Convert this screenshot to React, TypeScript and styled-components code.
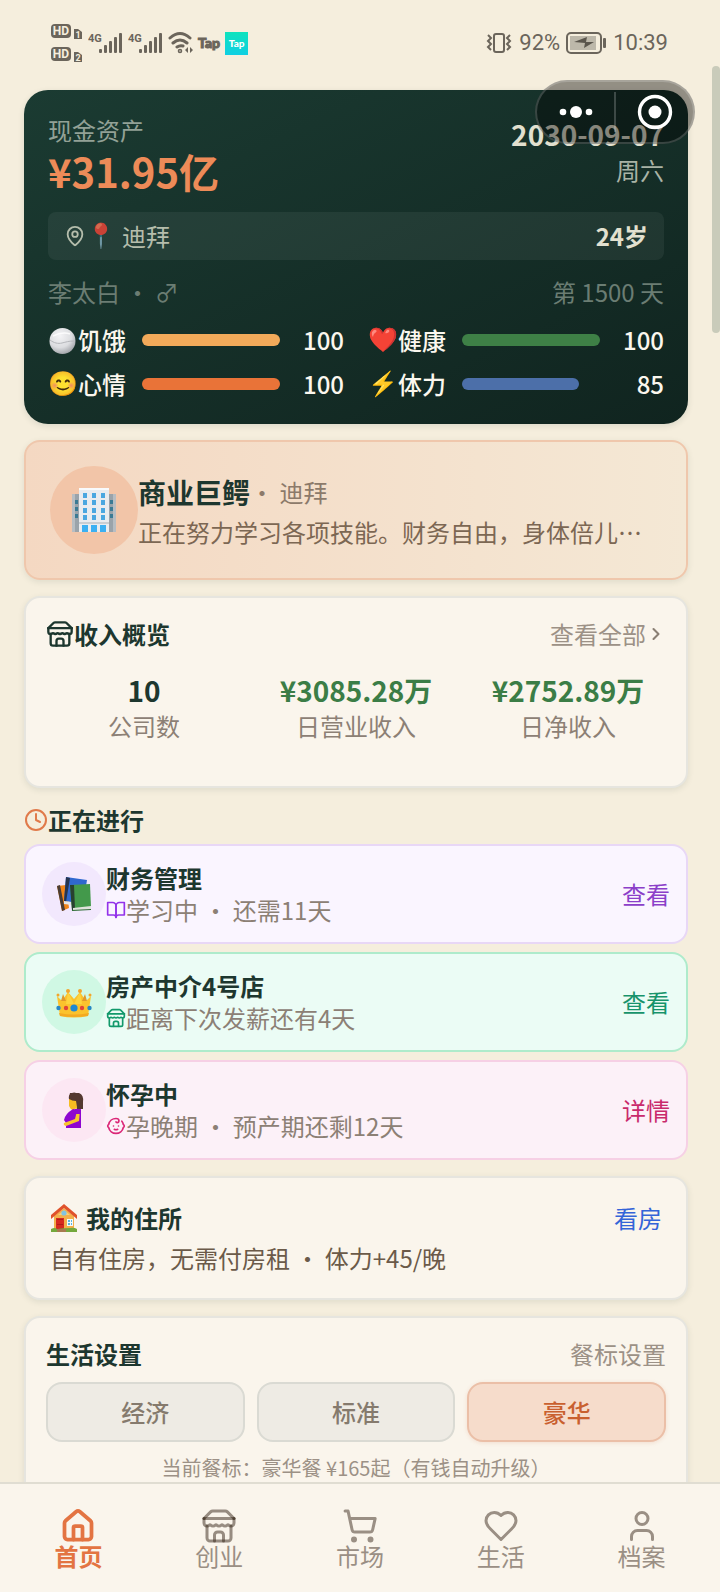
import React from "react";
import styled, { createGlobalStyle } from "styled-components";
import { Clock, MapPin, ChevronRight } from "lucide-react";

const GlobalStyle = createGlobalStyle`
  *, *::before, *::after { box-sizing: border-box; }
  body {
    margin: 0;
    background: #f5eedd;
    font-family: "Noto Sans CJK SC", "Noto Sans", sans-serif;
    font-size: 24px;
    line-height: 32px;
    color: #1d372f;
  }
  button { font: inherit; border: 0; background: none; padding: 0; cursor: pointer; }
  h1, h2, h3, p, dl, dd, dt { margin: 0; font-size: inherit; font-weight: inherit; }
`;

const Shell = styled.div`
  position: relative;
  height: 100vh;
  display: flex;
  flex-direction: column;
  background: #f5eedd;
`;

const Scroller = styled.main`
  flex: 1;
  min-height: 0;
  overflow-y: auto;
  scrollbar-width: none;
  padding: 0 32px 24px 24px;
  display: flex;
  flex-direction: column;
  gap: 16px;
  & > * { flex-shrink: 0; }
`;

const StatusBar = styled.header`
  display: flex;
  justify-content: space-between;
  align-items: center;
  height: 90px;
  padding: 0 20px 4px 27px;
  color: #6b655b;
`;
const StatusGroup = styled.div<{ $gap: number }>`
  display: flex;
  align-items: center;
  gap: ${(p) => p.$gap}px;
  font-family: Roboto, sans-serif;
  font-size: 22px;
`;

const HdBadges = () => (
  <svg width="32" height="38" viewBox="0 0 32 38" fontFamily="Roboto, sans-serif" fontWeight="700">
    {[0, 23].map((y, i) => (
      <g key={y} transform={`translate(0 ${y})`}>
        <rect x="0" y="0" width="20" height="14" rx="4" fill="#6b655b" />
        <text x="10" y="11" fontSize="12" textAnchor="middle" fill="#f5eedd">HD</text>
        <path d="M23 5h4l4 3v7h-8z" fill="#6b655b" />
        <text x="27" y="14" fontSize="9" textAnchor="middle" fill="#f5eedd">{i + 1}</text>
      </g>
    ))}
  </svg>
);
const Signal = () => (
  <svg width="35" height="24" viewBox="0 0 35 24" fontFamily="Roboto, sans-serif">
    <text x="0" y="11" fontSize="11" fontWeight="700" fill="#6b655b">4G</text>
    {[4, 8, 12, 16, 20].map((h, i) => (
      <rect key={h} x={11 + i * 5} y={22 - h} width="3" height={h} rx="1" fill="#6b655b" />
    ))}
  </svg>
);
const Wifi = () => (
  <svg width="25" height="24" viewBox="0 0 25 24" fill="none" stroke="#6b655b" strokeWidth="3" strokeLinecap="round">
    <path d="M2 7q10-9 20 0M5 12q7-6 14 0M9 16q3-2 6-1" />
    <circle cx="12" cy="20" r="0.8" />
    <path d="M20 16l-3 3 3 3zM22 16l3 3-3 3z" fill="#6b655b" stroke="none" />
  </svg>
);
const TapMark = styled.span`
  font-family: Lato, sans-serif;
  font-weight: 900;
  font-size: 14px;
  -webkit-text-stroke: 1px currentColor;
`;
const TapTile = styled.span`
  width: 23px;
  height: 23px;
  line-height: 22px;
  font-family: Lato, sans-serif;
  font-weight: 900;
  font-size: 10px;
  text-align: center;
  color: #fff;
  background: linear-gradient(#0fe3bd, #0fcfe3);
`;
const Vibrate = () => (
  <svg width="27" height="22" viewBox="0 0 27 22" fill="none" stroke="#6b655b" strokeWidth="2">
    <rect x="8" y="2" width="10" height="18" rx="2" />
    <path d="M2 3l3 3-3 3 3 3-3 3 3 3M24 3l-3 3 3 3-3 3 3 3-3 3" />
  </svg>
);
const Battery = () => (
  <svg width="41" height="22" viewBox="0 0 41 22">
    <rect x="1" y="1" width="34" height="20" rx="4" fill="none" stroke="#6b655b" strokeWidth="2" />
    <rect x="4" y="4" width="26" height="14" fill="#bdb8aa" />
    <path d="M8 10l13-5-1 5h8l-10 6 1-5z" fill="#5b564d" />
    <rect x="37" y="6" width="3" height="10" rx="1" fill="#6b655b" />
  </svg>
);

const Capsule = styled.div`
  position: absolute;
  top: 80px;
  right: 25px;
  width: 160px;
  height: 64px;
  display: flex;
  align-items: center;
  border-radius: 32px;
  border: 2px solid rgba(255, 255, 255, 0.18);
  background: rgba(0, 0, 0, 0.4);
`;
const CapsuleButton = styled.button`
  flex: 1;
  height: 40px;
  display: flex;
  align-items: center;
  justify-content: center;
  & + & { border-left: 2px solid rgba(255, 255, 255, 0.2); }
`;
const ScrollThumb = styled.div`
  position: absolute;
  top: 66px;
  right: 0;
  width: 8px;
  height: 267px;
  border-radius: 4px;
  background: #c9cbba;
`;

const Hero = styled.section`
  margin-top: -16px;
  padding: 24px;
  border-radius: 24px;
  color: #fbf7ee;
  background: linear-gradient(155deg, #1b3b32, #10241f);
  box-shadow: 0 2px 6px rgba(29, 55, 47, 0.12);
`;
const Row = styled.div`
  display: flex;
  justify-content: space-between;
  align-items: center;
`;
const HeroTop = styled(Row)`
  align-items: flex-start;
`;
const Muted = styled.p`
  color: #92a196;
`;
const Amount = styled.p`
  font-size: 40px;
  line-height: 50px;
  font-weight: 700;
  color: #ed8b58;
`;
const DateBlock = styled.div`
  text-align: right;
  color: #a9b3a6;
`;
const DateText = styled.p`
  font-size: 28px;
  line-height: 40px;
  font-weight: 700;
  color: #e2e0cf;
`;
const PlaceBar = styled(Row)`
  height: 48px;
  margin-top: 16px;
  padding: 0 16px;
  border-radius: 8px;
  background: rgba(255, 255, 255, 0.06);
`;
const Place = styled.span`
  display: flex;
  align-items: center;
  color: #b5bdac;
`;
const Age = styled.strong`
  color: #e2e0cf;
`;
const NameRow = styled(Row)`
  margin-top: 16px;
  color: #6b7d73;
`;
const Meters = styled.div`
  display: grid;
  grid-template-columns: 1fr 1fr;
  gap: 12px 24px;
  margin-top: 16px;
`;
const Meter = styled.div`
  display: grid;
  grid-template-columns: 78px 1fr 48px;
  gap: 16px;
  align-items: center;
  font-weight: 500;
`;
const MeterLabel = styled.span`
  display: flex;
  align-items: center;
  white-space: nowrap;
`;
const MeterValue = styled.span`
  text-align: right;
`;
const Track = styled.div`
  height: 12px;
`;
const Fill = styled.div<{ $color: string }>`
  height: 100%;
  border-radius: 6px;
  background: ${(p) => p.$color};
`;
const Emoji = styled.span<{ $width?: number; $dim?: boolean }>`
  display: inline-flex;
  align-items: center;
  flex: none;
  width: ${(p) => p.$width ?? 30}px;
  font-family: "Noto Color Emoji", sans-serif;
  opacity: ${(p) => (p.$dim ? 0.8 : 1)};
`;

const Card = styled.section<{ $pad?: number }>`
  padding: ${(p) => p.$pad ?? 20}px;
  border: 2px solid #e6e5df;
  border-radius: 16px;
  background: #faf5ec;
  box-shadow: 0 2px 6px rgba(29, 55, 47, 0.1);
`;
const ProfileCard = styled(Card)`
  display: flex;
  align-items: center;
  border-color: #efc7ac;
  background: linear-gradient(90deg, #f4d8c2, #f4e8d5);
`;
const Avatar = styled.div<{ $size: number; $bg: string }>`
  flex: none;
  display: flex;
  align-items: center;
  justify-content: center;
  width: ${(p) => p.$size}px;
  height: ${(p) => p.$size}px;
  border-radius: 50%;
  background: ${(p) => p.$bg};
`;
const Body = styled.div`
  flex: 1;
  min-width: 0;
`;
const ProfileBody = styled(Body)`
  padding-top: 4px;
`;
const ProfileTitle = styled.h1`
  display: flex;
  align-items: center;
  line-height: 40px;
  color: #8c7a6a;
`;
const JobName = styled.strong`
  font-size: 28px;
  color: #1d372f;
`;
const ProfileText = styled.p`
  line-height: 40px;
  color: #7c6753;
  white-space: nowrap;
  overflow: hidden;
  text-overflow: ellipsis;
`;
const Title = styled.h2`
  display: flex;
  align-items: center;
  font-weight: 700;
`;
const LinkButton = styled.button<{ $color: string }>`
  display: flex;
  align-items: center;
  color: ${(p) => p.$color};
`;
const Stats = styled.dl`
  display: grid;
  grid-template-columns: repeat(3, 1fr);
  gap: 16px;
  margin: 20px 0 24px;
  text-align: center;
`;
const Stat = styled.div`
  display: flex;
  flex-direction: column-reverse;
  color: #8c8075;
`;
const StatValue = styled.dd<{ $color: string }>`
  font-size: 28px;
  line-height: 40px;
  font-weight: 700;
  color: ${(p) => p.$color};
`;
const Tasks = styled.section`
  display: flex;
  flex-direction: column;
  gap: 8px;
`;
const TaskCard = styled.article<{ $bg: string; $line: string }>`
  display: flex;
  align-items: center;
  padding: 16px;
  border: 2px solid ${(p) => p.$line};
  border-radius: 16px;
  background: ${(p) => p.$bg};
`;
const TaskName = styled.h3`
  font-weight: 700;
`;
const TaskNote = styled.p<{ $icon: string }>`
  display: flex;
  align-items: center;
  color: #8c8075;
  svg { color: ${(p) => p.$icon}; }
`;
const HomeText = styled.p`
  margin-top: 8px;
  color: #6b5a49;
`;
const Options = styled.div`
  display: grid;
  grid-template-columns: repeat(3, 1fr);
  gap: 12px;
  margin: 12px 0;
`;
const Option = styled.button<{ $active?: boolean }>`
  height: 60px;
  border-radius: 16px;
  font-weight: 500;
  border: 2px solid ${(p) => (p.$active ? "#ebbfa7" : "#dadad3")};
  background: ${(p) => (p.$active ? "#f6dccb" : "#eeebe4")};
  color: ${(p) => (p.$active ? "#c9602f" : "#857a6d")};
  box-shadow: ${(p) => (p.$active ? "0 1px 4px rgba(200, 96, 47, 0.15)" : "none")};
`;
const Caption = styled.p`
  font-size: 20px;
  line-height: 28px;
  text-align: center;
  color: #9c9186;
`;
const Nav = styled.nav`
  flex: none;
  display: grid;
  grid-template-columns: repeat(5, 1fr);
  padding: 24px 8px;
  border-top: 2px solid #e0ddd2;
  background: #faf5ec;
`;
const NavItem = styled.button<{ $active?: boolean }>`
  display: flex;
  flex-direction: column;
  align-items: center;
  line-height: 24px;
  color: ${(p) => (p.$active ? "#e37442" : "#9a8f84")};
  font-weight: ${(p) => (p.$active ? 700 : 400)};
`;

type IconProps = { size: number; weight?: number; children: React.ReactNode };
const Icon = ({ size, weight = 2, children }: IconProps) => (
  <svg width={size} height={size} viewBox="0 0 24 24" fill="none" stroke="currentColor" strokeWidth={weight} strokeLinecap="round" strokeLinejoin="round" aria-hidden="true">
    {children}
  </svg>
);
const StoreIcon = ({ size, overlap }: { size: number; overlap?: boolean }) => (
  <Icon size={size}>
    <g stroke={overlap ? "rgba(60, 45, 30, 0.52)" : undefined}>
      <path d="m2 7 4.41-4.41A2 2 0 0 1 7.83 2h8.34a2 2 0 0 1 1.42.59L22 7" />
      <path d="M4 12v8a2 2 0 0 0 2 2h12a2 2 0 0 0 2-2v-8" />
      <path d="M15 22v-4a2 2 0 0 0-2-2h-2a2 2 0 0 0-2 2v4" />
      <path d="M2 7h20" />
      <path d="M22 7v3a2 2 0 0 1-2 2a2.7 2.7 0 0 1-1.59-.63.7.7 0 0 0-.82 0A2.7 2.7 0 0 1 16 12a2.7 2.7 0 0 1-1.59-.63.7.7 0 0 0-.82 0A2.7 2.7 0 0 1 12 12a2.7 2.7 0 0 1-1.59-.63.7.7 0 0 0-.82 0A2.7 2.7 0 0 1 8 12a2.7 2.7 0 0 1-1.59-.63.7.7 0 0 0-.82 0A2.7 2.7 0 0 1 4 12a2 2 0 0 1-2-2V7" />
    </g>
  </Icon>
);
const BookIcon = () => (
  <Icon size={20}>
    <path d="M2 3h6a4 4 0 0 1 4 4v14a3 3 0 0 0-3-3H2z" />
    <path d="M22 3h-6a4 4 0 0 0-4 4v14a3 3 0 0 1 3-3h7z" />
  </Icon>
);
const BabyIcon = () => (
  <Icon size={20}>
    <path d="M9 12h.01M15 12h.01M10 16c.5.3 1.2.5 2 .5s1.5-.2 2-.5" />
    <path d="M19 6.3a9 9 0 0 1 1.8 3.9 2 2 0 0 1 0 3.6 9 9 0 0 1-17.6 0 2 2 0 0 1 0-3.6A9 9 0 0 1 12 3c2 0 3.5 1.1 3.5 2.5s-.9 2.5-2 2.5c-.8 0-1.5-.4-1.5-1" />
  </Icon>
);
const HouseIcon = () => (
  <Icon size={36} weight={2.5}>
    <path d="M15 21v-8a1 1 0 0 0-1-1h-4a1 1 0 0 0-1 1v8" />
    <path d="M3 10a2 2 0 0 1 .709-1.528l7-5.999a2 2 0 0 1 2.582 0l7 5.999A2 2 0 0 1 21 10v9a2 2 0 0 1-2 2H5a2 2 0 0 1-2-2z" />
  </Icon>
);
const CartIcon = () => (
  <Icon size={36}>
    <circle cx="8" cy="21" r="1" fill="currentColor" />
    <circle cx="19" cy="21" r="1" fill="currentColor" />
    <path d="M2.05 2.05h2l2.66 12.42a2 2 0 0 0 2 1.58h9.78a2 2 0 0 0 1.95-1.57l1.65-7.43H5.12" />
  </Icon>
);
const HeartIcon = () => (
  <Icon size={36}>
    <path d="M19 14c1.49-1.46 3-3.21 3-5.5A5.5 5.5 0 0 0 16.5 3c-1.76 0-3 .5-4.5 2-1.5-1.5-2.74-2-4.5-2A5.5 5.5 0 0 0 2 8.5c0 2.3 1.5 4.05 3 5.5l7 7Z" />
  </Icon>
);
const UserIcon = () => (
  <Icon size={36}>
    <path d="M19 21v-2a4 4 0 0 0-4-4H9a4 4 0 0 0-4 4v2" />
    <circle cx="12" cy="7" r="4" />
  </Icon>
);

const RiceBall = () => (
  <svg width="28" height="28" viewBox="0 0 28 28" aria-hidden="true">
    <defs>
      <radialGradient id="rice" cx="0.4" cy="0.3" r="0.75">
        <stop offset="0" stopColor="#f4f4f6" />
        <stop offset="0.6" stopColor="#dcdde0" />
        <stop offset="1" stopColor="#9b9ea3" />
      </radialGradient>
    </defs>
    <circle cx="14.5" cy="15" r="13" fill="url(#rice)" />
    <path d="M2 14c4 3 8 4 12 3s7-2 12-2" fill="none" stroke="#b5b7bb" strokeWidth="1" />
    <path d="M5 10c6-3 12-4 17-2" fill="none" stroke="#fff" strokeWidth="1.5" opacity="0.8" />
  </svg>
);
const OfficeTower = () => (
  <svg width="44" height="44" viewBox="0 0 44 44" aria-hidden="true">
    <path d="M0 6h8v38H0zM36 6h8v38h-8z" fill="#9aa3aa" />
    <path d="M0 6h3v38H0zM41 6h3v38h-3z" fill="#b7bdc2" />
    <path d="M3 12h3v4H3zM3 19h3v4H3zM3 26h3v4H3zM38 12h3v4h-3zM38 19h3v4h-3zM38 26h3v4h-3z" fill="#3b7a94" />
    <rect x="7" y="0" width="30" height="44" fill="#e9ecef" />
    <rect x="7" y="0" width="30" height="2" fill="#f8fafb" />
    {[5, 12, 20, 27].map((y) =>
      [11, 20, 29].map((x) => <rect key={`${x}-${y}`} x={x} y={y} width="4" height="5" fill="#4aa7e0" />)
    )}
    <path d="M7 34h30v2H7z" fill="#c9ced2" />
    <path d="M10 37h6v7h-6zM19 37h6v7h-6zM28 37h6v7h-6z" fill="#3bb0f2" />
  </svg>
);
const Books = () => (
  <svg width="36" height="36" viewBox="0 0 36 36" aria-hidden="true">
    <path d="M1 10l9-1 3 23-7 3z" fill="#f08418" />
    <path d="M1 10l3-1 5 25-3 1z" fill="#4a3c34" />
    <path d="M10 1l21 3-4 24-19-3z" fill="#2f68cf" />
    <path d="M10 1l4 1-4 24-2-1z" fill="#26344f" />
    <path d="M8 25l8 1v3l-8-1z" fill="#e6e6e6" />
    <path d="M14 9l20-1 1 23-19 2z" fill="#43994b" />
    <path d="M14 9l4 0 1 24-3 2z" fill="#28402f" />
    <path d="M17 32l18-2v3l-18 2z" fill="#dfe3dc" />
    <path d="M16 34l19-1v1l-19 1z" fill="#2e6b36" />
  </svg>
);
const Crown = () => (
  <svg width="36" height="36" viewBox="0 0 36 36" aria-hidden="true">
    <path d="M1 12l5 5 6-9 6 7 6-7 6 9 5-5-3 20q-14 3-28 0z" fill="#fbc22d" />
    <path d="M5 17l2-7 3 7zM26 17l3-7 2 7z" fill="#e0982c" />
    <path d="M10 20l2-12 6 12 6-12 2 12z" fill="#fdd43f" />
    <g fill="#f2a52c">
      <circle cx="2" cy="11" r="1.5" /><circle cx="34" cy="11" r="1.5" />
      <circle cx="12" cy="7" r="2" /><circle cx="24" cy="7" r="2" />
    </g>
    <path d="M3 29q15 3 30 0l-1 3q-14 2-28 0z" fill="#f3a922" />
    <circle cx="18" cy="24" r="3.6" fill="#1e88d2" />
    <circle cx="10" cy="24" r="2.2" fill="#e24536" />
    <circle cx="26" cy="24" r="2.2" fill="#e24536" />
    <circle cx="2.5" cy="24" r="2.2" fill="#2787c4" />
    <circle cx="33.5" cy="24" r="2.2" fill="#2787c4" />
  </svg>
);
const ExpectingWoman = () => (
  <svg width="22" height="36" viewBox="0 0 22 36" aria-hidden="true">
    <path d="M7 1h9q5 2 4 9v7h-6L6 5z" fill="#543930" />
    <path d="M6 6q5 0 8 3v7l-4 2q-3-1-4-4z" fill="#f6bd22" />
    <path d="M6 7q-1-4 3-6 6-2 8 6l-1 8h-2l-1-6q-4 0-7-2z" fill="#543930" />
    <path d="M10 17l8 1v18H3v-5L1 28q1-6 9-11z" fill="#8e06d0" />
    <path d="M17 18l-1 11-13 5q-3-1-2-3l11-4 2-8q2-2 3-1z" fill="#f8c52c" />
    <path d="M12 17h6l-1 5h-5z" fill="#8e06d0" />
  </svg>
);
const Cottage = () => (
  <svg width="28" height="28" viewBox="0 0 28 28" aria-hidden="true">
    <path d="M4 12L14 4l10 8v14H4z" fill="#f3b04b" />
    <path d="M8 11l6-5 6 5z" fill="#f7cf7a" />
    <circle cx="14" cy="9" r="2.6" fill="#82c4e0" />
    <path d="M14 0L1 11v4L14 4l13 11v-4z" fill="#e0522b" />
    <rect x="6" y="14" width="8" height="12" fill="#d6291f" />
    <path d="M7 15h6v1H7zM7 20h6v1H7z" fill="#b01d16" />
    <rect x="17" y="15" width="6" height="7" fill="#f3fafc" />
    <path d="M18 16h2v2h-2zM21 16h1v2h-1zM18 19h2v2h-2zM21 19h1v2h-1z" fill="#5db5dd" />
    <path d="M1 25q4-2 6 0 7-1 13-1 4-1 7 1v3H1z" fill="#74a83c" />
    <path d="M7 25h9v3H7z" fill="#a8794f" />
  </svg>
);

const meters = [
  { emoji: <RiceBall />, label: "饥饿", value: 100, color: "#f2aa5a" },
  { emoji: "❤️", label: "健康", value: 100, color: "#3e8046" },
  { emoji: "😊", label: "心情", value: 100, color: "#e97338" },
  { emoji: "⚡", label: "体力", value: 85, color: "#4c6fa9" },
];
const stats = [
  { label: "公司数", value: "10", color: "#1d372f" },
  { label: "日营业收入", value: "¥3085.28万", color: "#3b7d46" },
  { label: "日净收入", value: "¥2752.89万", color: "#3b7d46" },
];
const tasks = [
  { picture: <Books />, name: "财务管理", icon: <BookIcon />, note: "学习中 • 还需11天", action: "查看", bg: "#faf5ff", line: "#e8d7f6", circle: "#f2e8fd", accent: "#9333ea", link: "#8b3fc9" },
  { picture: <Crown />, name: "房产中介4号店", icon: <StoreIcon size={20} />, note: "距离下次发薪还有4天", action: "查看", bg: "#ebfcf5", line: "#aeebcb", circle: "#d0f8e4", accent: "#12996b", link: "#17936b" },
  { picture: <ExpectingWoman />, name: "怀孕中", icon: <BabyIcon />, note: "孕晚期 • 预产期还剩12天", action: "详情", bg: "#fcf1f8", line: "#f6d0e5", circle: "#fce7f3", accent: "#db2777", link: "#c92a6c" },
];
const tabs = [
  { label: "首页", icon: <HouseIcon /> },
  { label: "创业", icon: <StoreIcon size={36} overlap /> },
  { label: "市场", icon: <CartIcon /> },
  { label: "生活", icon: <HeartIcon /> },
  { label: "档案", icon: <UserIcon /> },
];

export default function App() {
  return (
    <Shell lang="zh-CN">
      <GlobalStyle />
      <Scroller>
        <StatusBar>
          <StatusGroup $gap={5}>
            <HdBadges />
            <Signal />
            <Signal />
            <Wifi />
            <TapMark>Tap</TapMark>
            <TapTile>Tap</TapTile>
          </StatusGroup>
          <StatusGroup $gap={6}>
            <Vibrate />
            <span>92%</span>
            <Battery />
            <span>10:39</span>
          </StatusGroup>
        </StatusBar>

        <Hero>
          <HeroTop>
            <div>
              <Muted>现金资产</Muted>
              <Amount>¥31.95亿</Amount>
            </div>
            <DateBlock>
              <DateText>2030-09-07</DateText>
              <p>周六</p>
            </DateBlock>
          </HeroTop>
          <PlaceBar>
            <Place>
              <MapPin size={22} />
              <Emoji $width={36} $dim>📍</Emoji>
              <span>迪拜</span>
            </Place>
            <Age>24岁</Age>
          </PlaceBar>
          <NameRow>
            <span>李太白 • ♂</span>
            <span>第 1500 天</span>
          </NameRow>
          <Meters>
            {meters.map((m) => (
              <Meter key={m.label}>
                <MeterLabel>
                  <Emoji>{m.emoji}</Emoji>
                  {m.label}
                </MeterLabel>
                <Track>
                  <Fill $color={m.color} style={{ width: `${m.value}%` }} />
                </Track>
                <MeterValue>{m.value}</MeterValue>
              </Meter>
            ))}
          </Meters>
        </Hero>

        <ProfileCard $pad={24}>
          <Avatar $size={88} $bg="#f2c5a8">
            <OfficeTower />
          </Avatar>
          <ProfileBody>
            <ProfileTitle>
              <JobName>商业巨鳄</JobName>
              <span>• 迪拜</span>
            </ProfileTitle>
            <ProfileText>正在努力学习各项技能。财务自由，身体倍儿…</ProfileText>
          </ProfileBody>
        </ProfileCard>

        <Card>
          <Row>
            <Title>
              <StoreIcon size={28} />
              收入概览
            </Title>
            <LinkButton $color="#9c9186">
              查看全部
              <ChevronRight size={20} strokeWidth={2.5} color="#8a7f74" />
            </LinkButton>
          </Row>
          <Stats>
            {stats.map((s) => (
              <Stat key={s.label}>
                <dt>{s.label}</dt>
                <StatValue $color={s.color}>{s.value}</StatValue>
              </Stat>
            ))}
          </Stats>
        </Card>

        <Tasks>
          <Title>
            <Clock size={24} color="#e07a4a" />
            正在进行
          </Title>
          {tasks.map((t) => (
            <TaskCard key={t.name} $bg={t.bg} $line={t.line}>
              <Avatar $size={64} $bg={t.circle}>{t.picture}</Avatar>
              <Body>
                <TaskName>{t.name}</TaskName>
                <TaskNote $icon={t.accent}>
                  {t.icon}
                  {t.note}
                </TaskNote>
              </Body>
              <LinkButton $color={t.link}>{t.action}</LinkButton>
            </TaskCard>
          ))}
        </Tasks>

        <Card $pad={24}>
          <Row>
            <Title>
              <Emoji $width={36}><Cottage /></Emoji>
              我的住所
            </Title>
            <LinkButton $color="#3464d8">看房</LinkButton>
          </Row>
          <HomeText>自有住房，无需付房租 • 体力+45/晚</HomeText>
        </Card>

        <Card>
          <Row>
            <Title>生活设置</Title>
            <LinkButton $color="#9c9186">餐标设置</LinkButton>
          </Row>
          <Options>
            <Option>经济</Option>
            <Option>标准</Option>
            <Option $active>豪华</Option>
          </Options>
          <Caption>当前餐标：豪华餐 ¥165起（有钱自动升级）</Caption>
        </Card>
      </Scroller>

      <Nav>
        {tabs.map((t, i) => (
          <NavItem key={t.label} $active={i === 0}>
            {t.icon}
            {t.label}
          </NavItem>
        ))}
      </Nav>

      <ScrollThumb />
      <Capsule>
        <CapsuleButton aria-label="更多">
          <svg width="34" height="14" viewBox="0 0 34 14" fill="#fff">
            <circle cx="4" cy="7" r="3.3" />
            <circle cx="17" cy="7" r="6" />
            <circle cx="30" cy="7" r="3.3" />
          </svg>
        </CapsuleButton>
        <CapsuleButton aria-label="关闭">
          <svg width="36" height="36" viewBox="0 0 36 36">
            <circle cx="18" cy="18" r="15.5" fill="none" stroke="#fff" strokeWidth="3.4" />
            <circle cx="18" cy="18" r="6.5" fill="#fff" />
          </svg>
        </CapsuleButton>
      </Capsule>
    </Shell>
  );
}
